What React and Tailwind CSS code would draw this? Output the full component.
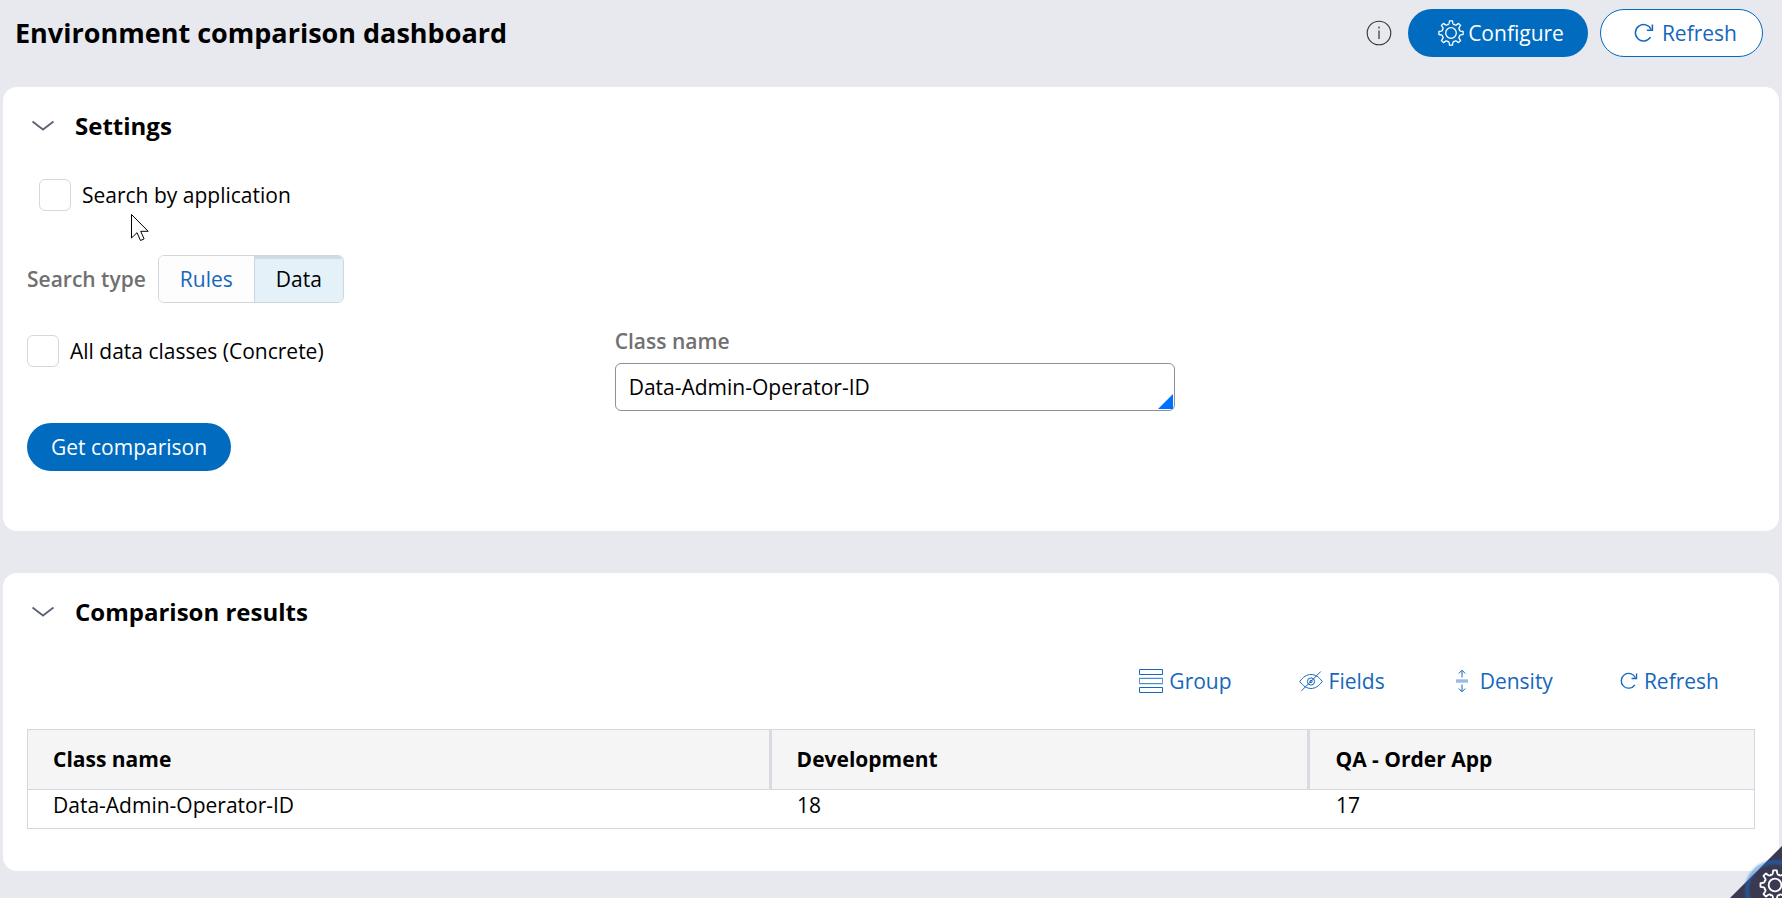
import React, { useState } from 'react';

const polar = (r, deg) => {
  const a = (deg * Math.PI) / 180;
  return `${(13 + r * Math.sin(a)).toFixed(2)} ${(13 - r * Math.cos(a)).toFixed(2)}`;
};

// eight teeth, rounded valleys between them
const gearPath =
  [0, 45, 90, 135, 180, 225, 270, 315]
    .map(
      (t, i) =>
        `${i ? 'L' : 'M'}${polar(9.8, t - 11)}L${polar(12.2, t - 7)}L${polar(12.2, t + 7)}L${polar(9.8, t + 11)}Q${polar(8.4, t + 17)} ${polar(9.3, t + 22.5)}Q${polar(8.4, t + 28)} ${polar(9.8, t + 34)}`
    )
    .join('') + 'Z';

const GearIcon = ({ className }) => (
  <svg viewBox="0 0 26 26" fill="none" stroke="currentColor" strokeWidth="1.3" strokeLinejoin="round" className={className}>
    <circle cx="13" cy="13" r="5.3" />
    <path d={gearPath} />
  </svg>
);

const RefreshIcon = ({ className }) => (
  <svg viewBox="0 0 20 20" fill="none" stroke="currentColor" strokeWidth="1.5" className={className}>
    <path d="M16.5 14.2a8.2 8.2 0 1 1 .6-7.7" />
    <path d="M18.4 1.6v5.6h-5.6" />
  </svg>
);

const InfoIcon = ({ className }) => (
  <svg viewBox="0 0 26 26" fill="none" stroke="currentColor" className={className}>
    <circle cx="13" cy="13" r="11.8" strokeWidth="1.1" />
    <path d="M13 10.5v8.5M13 6.5v2" strokeWidth="1.2" />
  </svg>
);

const GroupIcon = ({ className }) => (
  <svg viewBox="0 0 24 24" fill="none" stroke="currentColor" className={className}>
    <path d="M.5.5h23v5H.5zM.5 18.5h23v5H.5z" />
    <path d="M.5 9.5h23v5H.5z" strokeOpacity=".7" />
    <path d="M0 9h24M0 15h24" strokeOpacity=".35" />
  </svg>
);

const FieldsIcon = ({ className }) => (
  <svg viewBox="0 0 24 20" fill="none" stroke="currentColor" strokeWidth="1" className={className}>
    <path d="M.8 10.5C4 6 7.8 3.5 12 3.5s8 2.5 11.2 7c-3.2 4.5-7 7-11.2 7S4 15 .8 10.5z" />
    <circle cx="12" cy="10.5" r="3.6" />
    <circle cx="12" cy="10.5" r="1.2" />
    <path d="M2.5 19.8 21.8.5" />
  </svg>
);

const DensityIcon = ({ className }) => (
  <svg viewBox="0 0 12 24" fill="none" stroke="currentColor" className={className}>
    <path d="M6 8.5V1.5M2.8 4.5 6 1.2l3.2 3.3M6 15.5v7M2.8 19.5 6 22.8l3.2-3.3" />
    <path d="M0 12h12" strokeWidth="4" strokeOpacity=".3" />
    <path d="M0 12h12" strokeOpacity=".4" />
  </svg>
);

const Pointer = () => (
  <svg viewBox="0 0 20 29" fill="white" stroke="black" className="pointer-events-none absolute left-[130px] top-[213px] w-5">
    <path d="M1.5 1.5v23.5l5.5-5.3 3.5 7.8 3.6-1.6-3.4-7.6h7.5z" />
  </svg>
);

const Panel = ({ title, className, children }) => {
  const [open, setOpen] = useState(true);
  return (
    <section className={`rounded-[14px] bg-white px-6 ${className}`}>
      <h2 className="text-[24px] leading-8 font-bold">
        <button type="button" aria-expanded={open} onClick={() => setOpen(!open)} className="flex items-center gap-5 pl-1">
          <svg viewBox="0 0 24 12" fill="none" stroke="#5c6178" strokeWidth="1.8" className="w-6">
            <path d="M1.5 1.5 12 9.5l10.5-8" />
          </svg>
          {title}
        </button>
      </h2>
      {open && children}
    </section>
  );
};

const Check = ({ id, label }) => (
  <div className="flex items-center gap-[11px]">
    <input id={id} type="checkbox" className="size-8 appearance-none rounded-md border border-[#d3d7de] bg-white checked:bg-[#006bbf]" />
    <label htmlFor={id}>{label}</label>
  </div>
);

const rows = [{ name: 'Data-Admin-Operator-ID', dev: 18, qa: 17 }];

const toolbar = [
  { label: 'Group', icon: <GroupIcon className="size-6" /> },
  { label: 'Fields', icon: <FieldsIcon className="w-6" /> },
  { label: 'Density', icon: <DensityIcon className="mr-1.5 ml-1 w-3" /> },
  { label: 'Refresh', icon: <RefreshIcon className="size-[18px]" /> },
];

const App = () => {
  const [type, setType] = useState('Data');
  const [className, setClassName] = useState('Data-Admin-Operator-ID');

  return (
    <div className="relative min-h-screen bg-[#e8e9ee] px-[3px] font-['Open_Sans',sans-serif] text-[21px] leading-7 text-black">
      <header className="flex items-center justify-between pt-[9px] pr-4 pb-[30px] pl-3">
        <h1 className="text-[27px] leading-9 font-bold">Environment comparison dashboard</h1>
        <div className="flex items-center gap-3">
          <button type="button" aria-label="Information" className="mr-1 text-[#333]">
            <InfoIcon className="size-[26px]" />
          </button>
          <button type="button" className="flex h-12 items-center gap-1 rounded-full bg-[#006bbf] pr-6 pl-[30px] text-white">
            <GearIcon className="size-[26px]" />
            Configure
          </button>
          <button type="button" className="flex h-12 items-center gap-2 rounded-full border border-[#006bbf] bg-white pr-[25px] pl-[33px] text-[#1567bd]">
            <RefreshIcon className="size-5" />
            Refresh
          </button>
        </div>
      </header>

      <main>
        <Panel title="Settings" className="pt-[23px] pb-[60px]">
          <div className="mt-[37px] pl-3">
            <Check id="by-app" label="Search by application" />
          </div>
          <div className="mt-11 flex items-center gap-3">
            <span id="search-type" className="font-semibold text-[#707070]">Search type</span>
            <div role="group" aria-labelledby="search-type" className="flex h-12 overflow-hidden rounded-md border border-[#cfd7df]">
              {['Rules', 'Data'].map((item) => (
                <button
                  key={item}
                  type="button"
                  aria-pressed={type === item}
                  onClick={() => setType(item)}
                  className={
                    type === item
                      ? 'border-l border-[#cfd7df] bg-[#e4f1f9] px-[21px] shadow-[inset_0_3px_1px_#cfdbe3]'
                      : 'bg-[#fdfdfe] px-[21px] text-[#1567bd]'
                  }
                >
                  {item}
                </button>
              ))}
            </div>
          </div>
          <div className="mt-6 -mr-2 grid grid-cols-3 gap-[27px]">
            <div className="pt-2">
              <Check id="all-classes" label="All data classes (Concrete)" />
            </div>
            <div className="flex flex-col gap-2">
              <label htmlFor="class-name" className="font-semibold text-[#707070]">Class name</label>
              <div className="relative">
                <input
                  id="class-name"
                  type="text"
                  value={className}
                  onChange={(e) => setClassName(e.target.value)}
                  className="h-12 w-full rounded-md border border-[#8f8f94] bg-white px-[13px]"
                />
                <svg viewBox="0 0 15 15" className="pointer-events-none absolute right-0.5 bottom-0.5 w-[15px]">
                  <path d="M15 0v15H0z" fill="#0070ff" />
                </svg>
              </div>
            </div>
          </div>
          <button type="button" className="mt-3 h-12 rounded-full bg-[#006bbf] px-6 text-white">
            Get comparison
          </button>
        </Panel>

        <Panel title="Comparison results" className="mt-[42px] pt-[23px] pb-[42px]">
          <div className="mt-[39px] flex justify-end gap-[67px] pr-9 text-[#1567bd]">
            {toolbar.map(({ label, icon }) => (
              <button key={label} type="button" className="flex items-center gap-1.5">
                {icon}
                {label}
              </button>
            ))}
          </div>
          <table className="mt-[34px] w-full table-fixed border-collapse border border-[#d5d7e0] text-left">
            <thead className="bg-[#f5f5f5]">
              <tr className="h-[60px] border-b border-[#d5d7e0]">
                <th className="w-[43%] pb-0.5 pl-[25px] font-bold">Class name</th>
                <th className="w-[31.2%] border-l-3 border-[#d9dbe3] pb-0.5 pl-[25px] font-bold">Development</th>
                <th className="border-l-3 border-[#d9dbe3] pb-0.5 pl-[25px] font-bold">QA - Order App</th>
              </tr>
            </thead>
            <tbody>
              {rows.map((row) => (
                <tr key={row.name}>
                  <td className="pt-px pb-[9px] pl-[25px]">{row.name}</td>
                  <td className="pt-px pb-[9px] pl-[27px]">{row.dev}</td>
                  <td className="pt-px pb-[9px] pl-[27px]">{row.qa}</td>
                </tr>
              ))}
            </tbody>
          </table>
        </Panel>
      </main>

      <Pointer />
      <button type="button" aria-label="Developer tools" className="fixed right-0 bottom-0 text-white">
        <svg viewBox="0 0 52 52" className="w-[52px] overflow-visible" fill="none">
          <defs>
            <filter id="glow" x="-30%" y="-30%" width="160%" height="160%">
              <feGaussianBlur stdDeviation="1.5" />
            </filter>
          </defs>
          <path d="M52 0v52H0z" fill="#3a3952" />
          <circle cx="45" cy="44" r="28" stroke="#1673d6" strokeWidth="2.5" opacity=".8" filter="url(#glow)" />
          <g transform="translate(29.4 23.4) scale(1.2)" stroke="currentColor" strokeWidth="1.5" strokeLinejoin="round">
            <circle cx="13" cy="13" r="5.3" />
            <path d={gearPath} />
          </g>
        </svg>
      </button>
    </div>
  );
};
export default App;
